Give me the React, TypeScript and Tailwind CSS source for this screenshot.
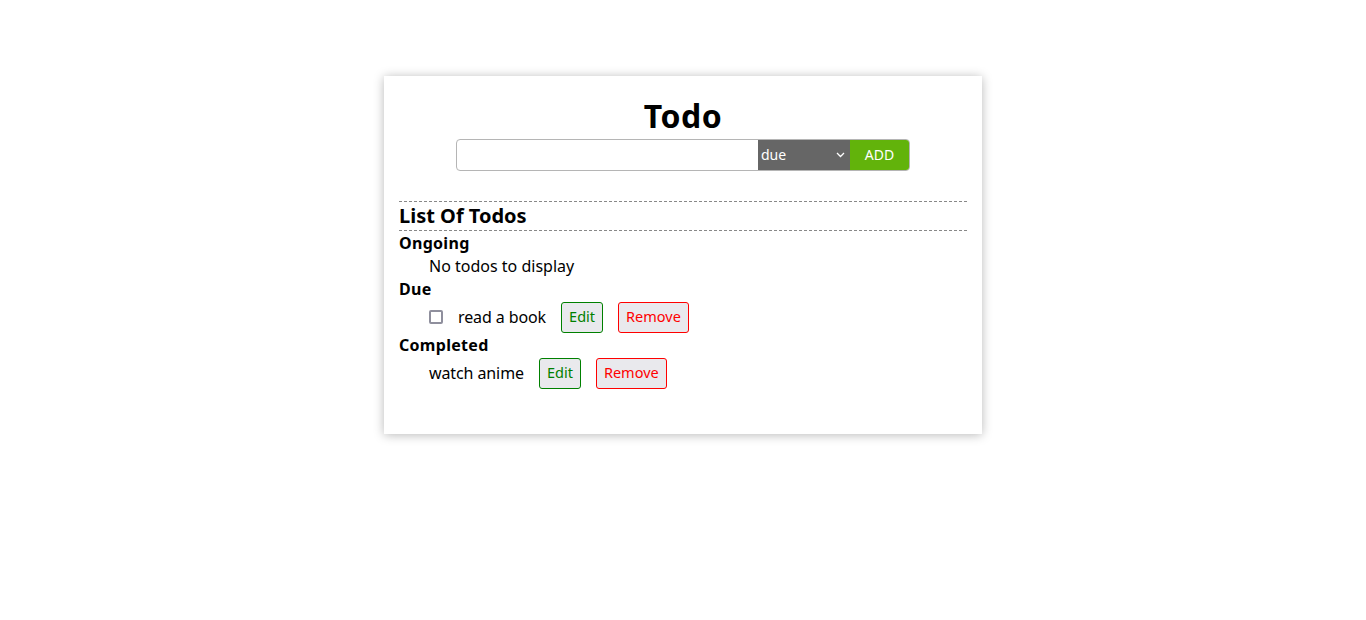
import { useState } from 'react';

type Todo = { id: number; text: string; status: 'ongoing' | 'due' | 'completed' };

const INITIAL: Todo[] = [
  { id: 1, text: 'read a book', status: 'due' },
  { id: 2, text: 'watch anime', status: 'completed' },
];

const sans = { fontFamily: '"Noto Sans", "Open Sans", sans-serif' };

function RowButtons() {
  return (
    <>
      <button className="ml-[15px] h-[31px] px-[7px] rounded-[3px] border border-[#008000] bg-[#e9e9ed] text-[#008000] text-[14.5px]">
        Edit
      </button>
      <button className="ml-[15px] h-[31px] px-[7px] rounded-[3px] border border-[#ff0000] bg-[#e9e9ed] text-[#ff0000] text-[14.5px]">
        Remove
      </button>
    </>
  );
}

export default function App() {
  const [todos] = useState<Todo[]>(INITIAL);
  const [text, setText] = useState('');
  const [status, setStatus] = useState('due');

  const ongoing = todos.filter((t) => t.status === 'ongoing');
  const due = todos.filter((t) => t.status === 'due');
  const done = todos.filter((t) => t.status === 'completed');

  return (
    <div className="min-h-screen bg-white text-black pt-[76px]" style={sans}>
      <div className="w-[598px] mx-auto bg-white shadow-[0_1px_10px_rgba(0,0,0,0.28)] px-[15px] pt-[20px] pb-[45px]">
        <h1 className="text-center text-[32px] leading-[40px] font-bold tracking-[0.5px]">Todo</h1>
        <div className="mt-[3px] mx-auto w-[454px] h-[32px] flex border border-[#b5b5b5] rounded-[4px] overflow-hidden">
          <input
            value={text}
            onChange={(e) => setText(e.target.value)}
            className="w-[301px] h-full outline-none px-2 text-[14px]"
          />
          <div className="relative w-[92px] h-full bg-[#666666] text-white text-[14px]">
            <select
              value={status}
              onChange={(e) => setStatus(e.target.value)}
              className="appearance-none w-full h-full bg-transparent pl-[3px] pb-[2px] outline-none"
            >
              <option value="due">due</option>
              <option value="ongoing">ongoing</option>
              <option value="completed">completed</option>
            </select>
            <svg className="absolute right-[5px] top-[12px] pointer-events-none" width="9" height="6" viewBox="0 0 9 6">
              <path d="M1 1l3.5 3.5L8 1" fill="none" stroke="white" strokeWidth="1.3" />
            </svg>
          </div>
          <button className="flex-1 h-full bg-[#62b30b] text-white text-[14px] pb-[2px]">ADD</button>
        </div>

        <div className="mt-[30px] border-y border-dashed border-[#888] h-[30px] flex items-center">
          <h2 className="text-[20px] font-bold">List Of Todos</h2>
        </div>

        <h3 className="text-[16px] font-bold leading-[24px] tracking-[0.3px]">Ongoing</h3>
        <div className="pl-[30px] text-[16px] leading-[22px]">
          {ongoing.length === 0 ? 'No todos to display' : null}
        </div>

        <h3 className="text-[16px] font-bold leading-[24px] tracking-[0.3px]">Due</h3>
        {due.map((t) => (
          <div key={t.id} className="pl-[30px] h-[32px] flex items-center text-[16px]">
            <input
              type="checkbox"
              className="appearance-none w-[14px] h-[14px] m-0 border-2 border-[#8f8f9d] rounded-[2px] bg-white"
            />
            <span className="ml-[15px] tracking-[-0.1px]">{t.text}</span>
            <RowButtons />
          </div>
        ))}

        <h3 className="text-[16px] font-bold leading-[24px] tracking-[0.3px]">Completed</h3>
        {done.map((t) => (
          <div key={t.id} className="pl-[30px] h-[32px] flex items-center text-[16px]">
            <span className="tracking-[-0.1px]">{t.text}</span>
            <RowButtons />
          </div>
        ))}
      </div>
    </div>
  );
}
